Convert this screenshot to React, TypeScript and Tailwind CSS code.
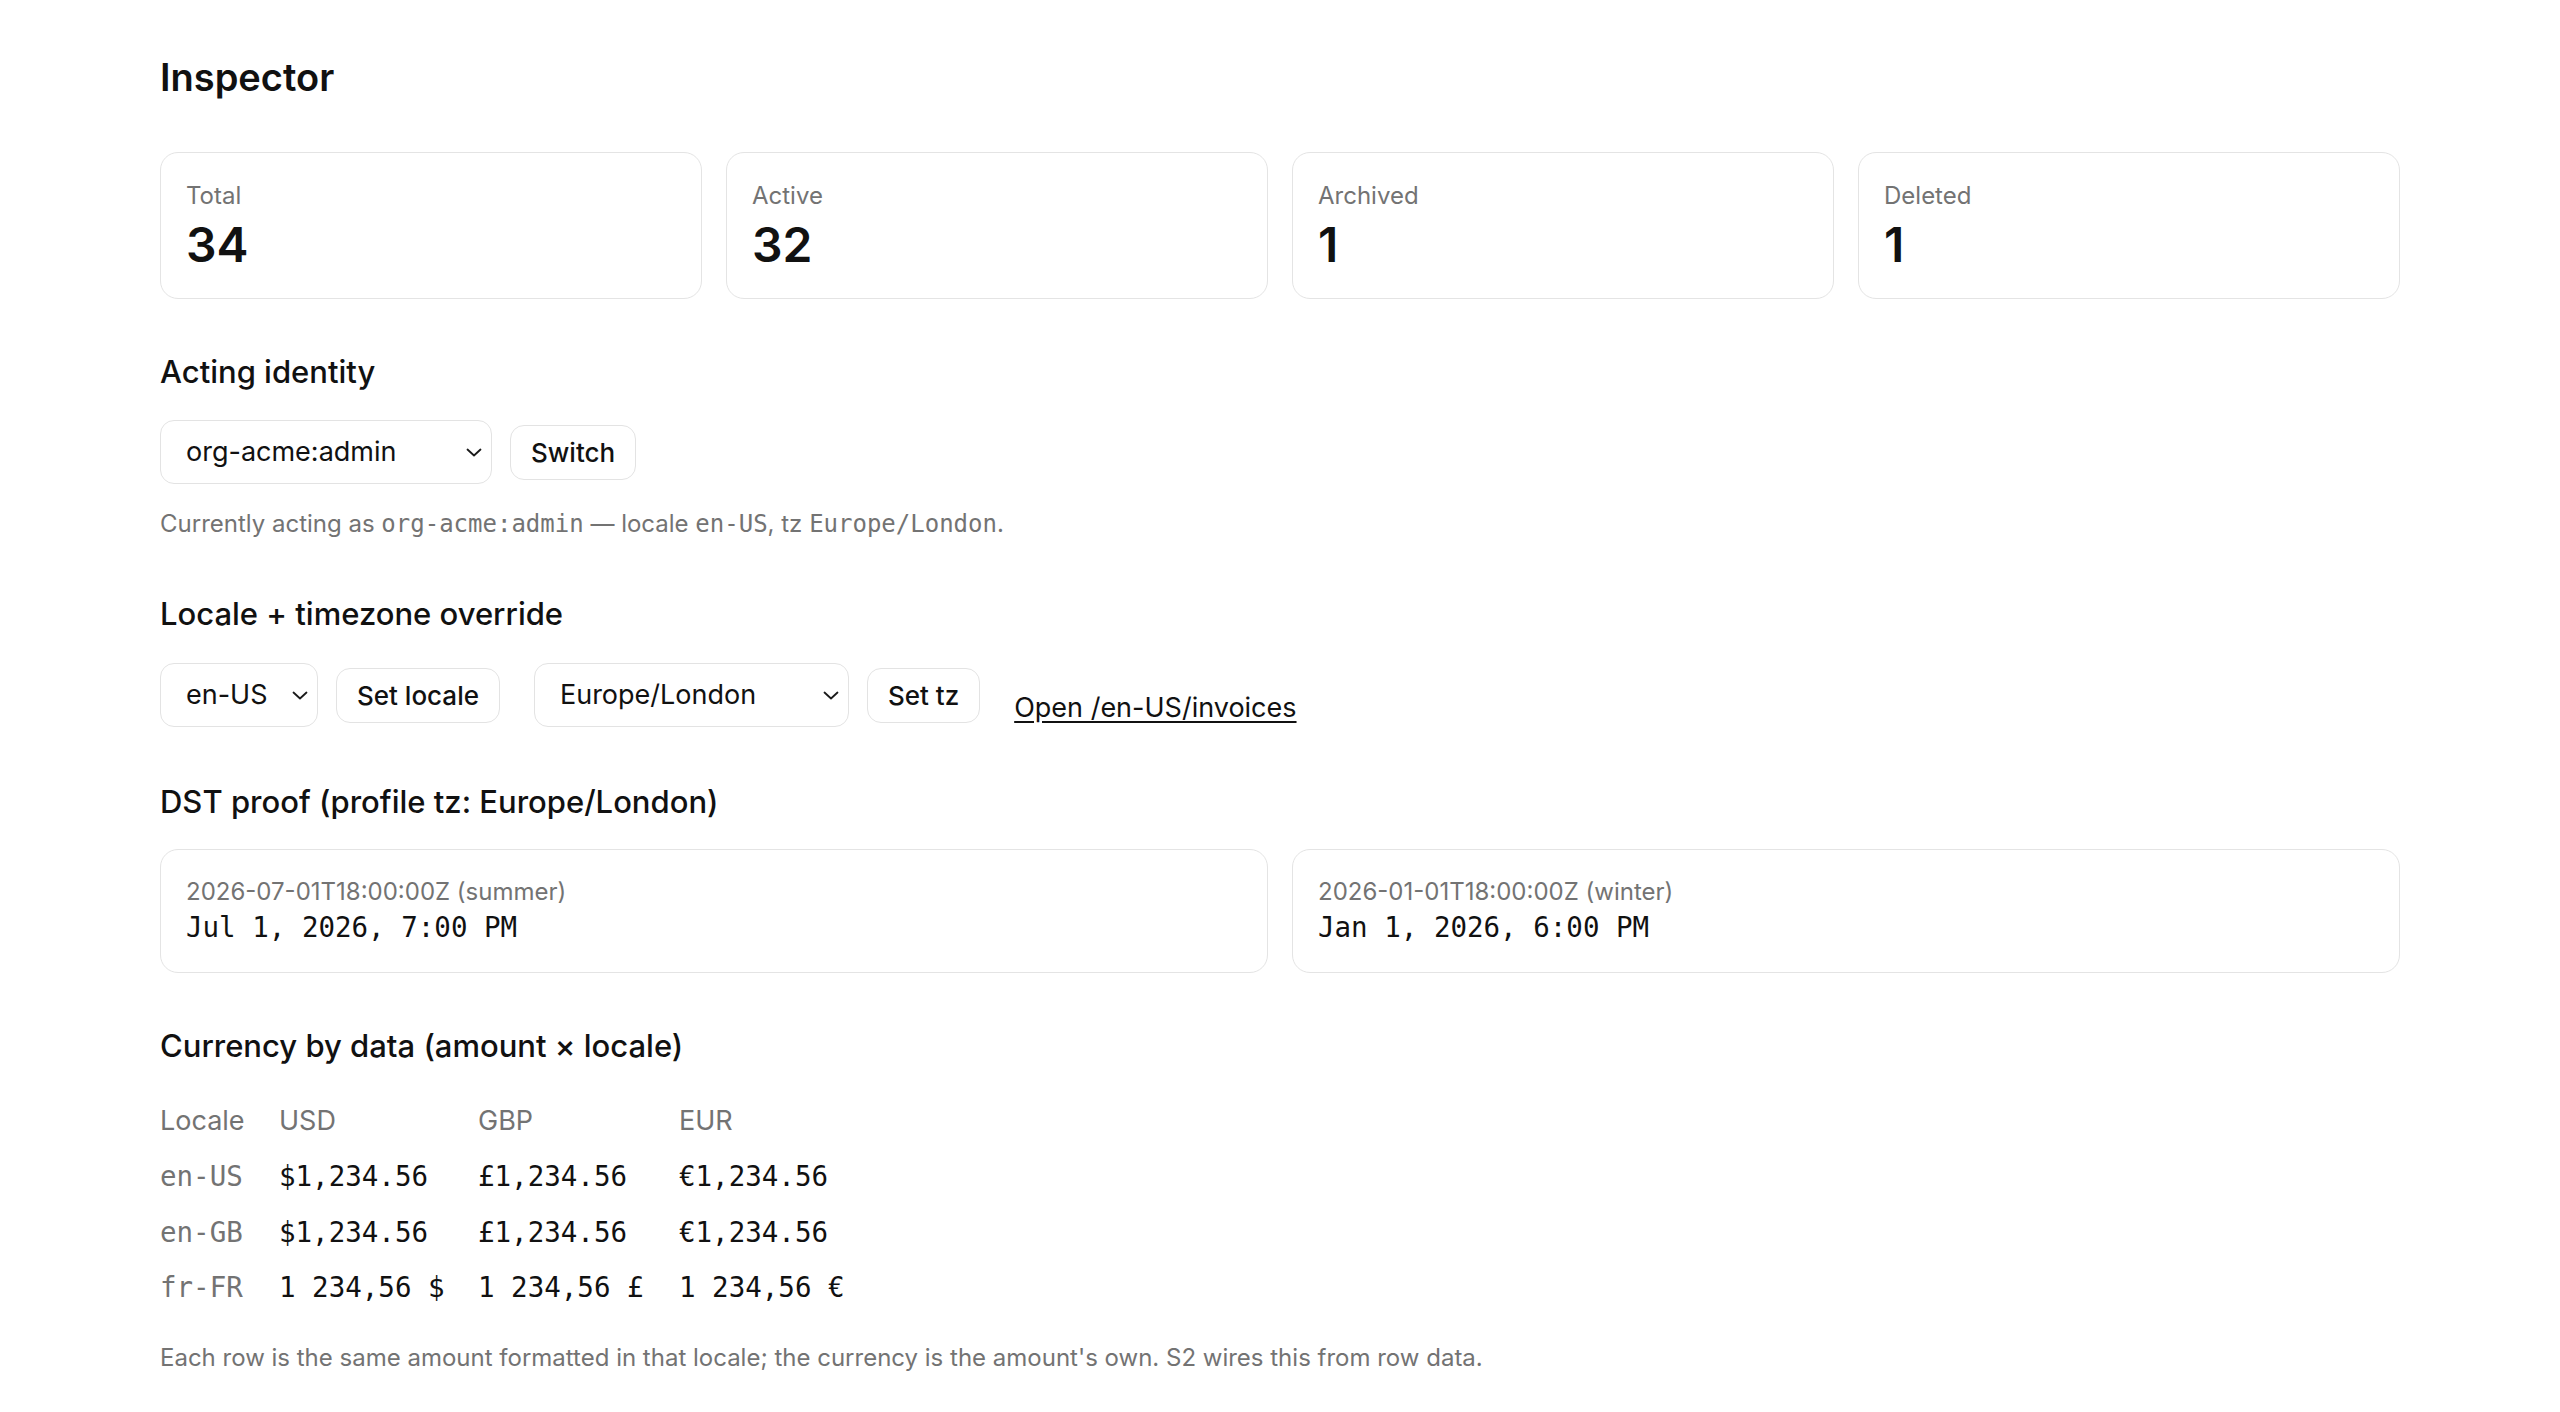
import React from "react";

const sans = "font-['Inter','Noto_Sans',sans-serif]";
const mono = "font-['DejaVu_Sans_Mono','Liberation_Mono',monospace]";

function Chevron() {
  return (
    <svg width="16" height="9" viewBox="0 0 16 9" fill="none" className="shrink-0">
      <path d="M1.5 1.5L8 7.5L14.5 1.5" stroke="#1a1a1a" strokeWidth="1.8" strokeLinecap="round" strokeLinejoin="round" />
    </svg>
  );
}

function FakeSelect({ value, width }: { value: string; width: string }) {
  return (
    <div
      className={`flex h-[64px] items-center justify-between rounded-[14px] border border-[#e3e3e3] bg-white pl-[25px] pr-[9px] text-[27px] text-[#111] ${width}`}
    >
      <span>{value}</span>
      <Chevron />
    </div>
  );
}

function Btn({ children }: { children: React.ReactNode }) {
  return (
    <button className="flex h-[55px] items-center rounded-[14px] border border-[#e3e3e3] bg-white px-[20px] text-[26px] font-medium text-[#111]">
      {children}
    </button>
  );
}

function StatCard({ label, value }: { label: string; value: string }) {
  return (
    <div className="flex h-[147px] flex-col rounded-[18px] border-[1.5px] border-[#e4e4e4] bg-white px-[25px] pt-[27px]">
      <div className="text-[24px] leading-[32px] text-[#737373]">{label}</div>
      <div className="mt-[5px] text-[48px] font-semibold leading-[56px] text-[#111]">{value}</div>
    </div>
  );
}

function DstCard({ label, value }: { label: string; value: string }) {
  return (
    <div className="flex h-[124px] flex-col rounded-[18px] border-[1.5px] border-[#e4e4e4] bg-white px-[25px] pt-[27px]">
      <div className="text-[24px] leading-[30px] text-[#737373]">{label}</div>
      <div className={`${mono} mt-[2px] text-[27.5px] leading-[36px] text-[#111]`}>{value}</div>
    </div>
  );
}

const rows = [
  { locale: "en-US", usd: "$1,234.56", gbp: "£1,234.56", eur: "€1,234.56" },
  { locale: "en-GB", usd: "$1,234.56", gbp: "£1,234.56", eur: "€1,234.56" },
  { locale: "fr-FR", usd: "1 234,56 $", gbp: "1 234,56 £", eur: "1 234,56 €" },
];

export default function App() {
  return (
    <div className={`${sans} min-h-[1412px] w-full bg-white px-[160px] pt-[55px] text-[#111]`}>
      <h1 className="text-[38px] font-semibold leading-[44px]">Inspector</h1>

      <div className="mt-[53px] grid grid-cols-4 gap-[24px]">
        <StatCard label="Total" value="34" />
        <StatCard label="Active" value="32" />
        <StatCard label="Archived" value="1" />
        <StatCard label="Deleted" value="1" />
      </div>

      <h2 className="mt-[55px] text-[31px] font-medium leading-[36px]">Acting identity</h2>
      <div className="mt-[30px] flex items-center gap-[18px]">
        <FakeSelect value="org-acme:admin" width="w-[332px]" />
        <Btn>Switch</Btn>
      </div>
      <p className="mt-[25px] text-[24px] leading-[30px] text-[#737373]">
        Currently acting as <span className={`${mono} text-[24px]`}>org-acme:admin</span> — locale{" "}
        <span className={`${mono} text-[24px]`}>en-US</span>, tz{" "}
        <span className={`${mono} text-[24px]`}>Europe/London</span>.
      </p>

      <h2 className="mt-[57px] text-[31px] font-medium leading-[36px]">Locale + timezone override</h2>
      <div className="mt-[31px] flex items-center">
        <div className="flex items-center gap-[18px]">
          <FakeSelect value="en-US" width="w-[158px]" />
          <Btn>Set locale</Btn>
        </div>
        <div className="ml-[34px] flex items-center gap-[18px]">
          <FakeSelect value="Europe/London" width="w-[315px]" />
          <Btn>Set tz</Btn>
        </div>
        <a href="#" className="ml-[34px] mt-[26px] text-[27px] leading-[36px] text-[#111] underline underline-offset-[4px]">
          Open /en-US/invoices
        </a>
      </div>

      <h2 className="mt-[57px] text-[31px] font-medium leading-[36px]">DST proof (profile tz: Europe/London)</h2>
      <div className="mt-[29px] grid grid-cols-2 gap-[24px]">
        <DstCard label="2026-07-01T18:00:00Z (summer)" value="Jul 1, 2026, 7:00 PM" />
        <DstCard label="2026-01-01T18:00:00Z (winter)" value="Jan 1, 2026, 6:00 PM" />
      </div>

      <h2 className="mt-[55px] text-[31px] font-medium leading-[36px]">Currency by data (amount × locale)</h2>
      <table className="mt-[30px] border-collapse">
        <thead>
          <tr className="h-[55px] text-left text-[27px] font-normal text-[#737373]">
            <th className="w-[119px] p-0 font-normal">Locale</th>
            <th className="w-[199px] p-0 font-normal">USD</th>
            <th className="w-[201px] p-0 font-normal">GBP</th>
            <th className="p-0 font-normal">EUR</th>
          </tr>
        </thead>
        <tbody className={`${mono} text-[27.5px]`}>
          {rows.map((r) => (
            <tr key={r.locale} className="h-[55.5px]">
              <td className="p-0 text-[#737373]">{r.locale}</td>
              <td className="p-0 text-[#111]">{r.usd}</td>
              <td className="p-0 text-[#111]">{r.gbp}</td>
              <td className="p-0 text-[#111]">{r.eur}</td>
            </tr>
          ))}
        </tbody>
      </table>
      <p className="mt-[27px] text-[24px] leading-[30px] text-[#737373]">
        Each row is the same amount formatted in that locale; the currency is the amount's own. S2 wires this from row data.
      </p>
    </div>
  );
}
